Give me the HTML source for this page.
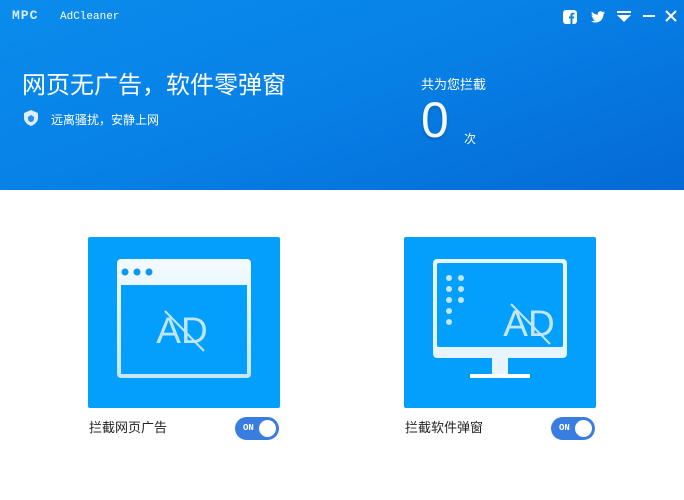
<!DOCTYPE html>
<html style="overflow:hidden;height:500px"><head><meta charset="utf-8"><style>
*{margin:0;padding:0;box-sizing:border-box}
body{width:684px;height:500px;overflow:hidden;background:#fff;font-family:"Liberation Sans","Noto Sans CJK SC",sans-serif;position:relative}
.hdr{position:absolute;left:0;top:0;width:684px;height:190px;background:linear-gradient(160deg,#0b8cec 0%,#0780e6 50%,#0569d4 100%);overflow:hidden}
.t{position:absolute;color:#fff;white-space:nowrap}
.card{position:absolute;top:237px;width:192px;height:171px;background:#02a0fc;border-radius:2px}
.lbl{position:absolute;top:419px;font-size:13px;color:#222;line-height:18px}
.tg{position:absolute;top:417px;width:44px;height:23px;border-radius:12px;background:#3a7de0}
.tg span{position:absolute;left:8px;top:6px;font:bold 9px "Liberation Mono",monospace;color:#fff}
.tg i{position:absolute;right:3px;top:3px;width:17px;height:17px;border-radius:50%;background:#fff}
</style></head><body>
<div class="hdr">
<div class="t" style="left:12px;top:8px;font:bold 13px 'Liberation Mono',monospace;letter-spacing:1px;opacity:.85">MPC</div>
<div class="t" style="left:60px;top:11px;font:11px 'Liberation Mono',monospace">AdCleaner</div>
<div class="t" style="left:22px;top:71px;font-size:24px;line-height:30px">网页无广告，软件零弹窗</div>
<svg style="position:absolute;left:24px;top:110px" width="14" height="16" viewBox="0 0 14 16"><path d="M7 0L14 3V8C14 12 10 15 7 16C4 15 0 12 0 8V3Z" fill="#dfeefc"/><path d="M7 5L10 7V9C10 11 8 12 7 12C6 12 4 11 4 9V7Z" fill="#2b8fe6"/></svg>
<div class="t" style="left:51px;top:111px;font-size:12px">远离骚扰，安静上网</div>
<div class="t" style="left:421px;top:74px;font-size:13px">共为您拦截</div>
<div class="t" style="left:421px;top:92px;font-size:50px;line-height:56px;color:#f2f8ff;text-shadow:0 2px 3px rgba(0,0,0,.2)">0</div>
<div class="t" style="left:464px;top:130px;font-size:12px">次</div>
<svg style="position:absolute;left:563px;top:10px" width="14" height="14"><rect width="14" height="14" rx="3" fill="#fff"/><path d="M9.5 14V8.5H11L11.3 6.5H9.5V5.5C9.5 4.9 9.7 4.5 10.5 4.5H11.4V2.8C11 2.7 10.4 2.7 9.8 2.7C8.4 2.7 7.5 3.5 7.5 5V6.5H6V8.5H7.5V14Z" fill="#0a86e8"/></svg>
<svg style="position:absolute;left:591px;top:11px" width="14" height="12" viewBox="0 0 24 20"><path d="M24 2.4a10 10 0 0 1-2.8.8A5 5 0 0 0 23.3.4a10 10 0 0 1-3.1 1.2A4.9 4.9 0 0 0 11.8 6 14 14 0 0 1 1.7.9a4.9 4.9 0 0 0 1.5 6.6A4.9 4.9 0 0 1 1 6.9a4.9 4.9 0 0 0 3.9 4.8 5 5 0 0 1-2.2.1 4.9 4.9 0 0 0 4.6 3.4A9.9 9.9 0 0 1 0 17.2 14 14 0 0 0 7.5 19.4c9 0 14-7.5 14-14v-.6A10 10 0 0 0 24 2.4z" fill="#fff"/></svg>
<svg style="position:absolute;left:617px;top:11px" width="14" height="12"><rect x="0" y="0" width="14" height="2" fill="#fff"/><path d="M0 4H14L7 11Z" fill="#fff"/></svg>
<div style="position:absolute;left:643px;top:15px;width:12px;height:2px;background:#fff"></div>
<svg style="position:absolute;left:665px;top:10px" width="12" height="12"><path d="M1 1L11 11M11 1L1 11" stroke="#fff" stroke-width="2"/></svg>
</div>

<div class="card" style="left:88px">
<svg width="192" height="171">
<defs><linearGradient id="tb" x1="0" y1="0" x2="0" y2="1"><stop offset="0" stop-color="#f4fbff"/><stop offset="1" stop-color="#c6e6fb"/></linearGradient></defs>
<rect x="29" y="22" width="134" height="119" rx="4" fill="url(#tb)"/>
<rect x="33" y="48" width="126" height="89" fill="#02a0fc"/>
<circle cx="37" cy="35" r="3.5" fill="#0797ee"/><circle cx="49" cy="35" r="3.5" fill="#0797ee"/><circle cx="61" cy="35" r="3.5" fill="#0797ee"/>
<text x="94" y="106" text-anchor="middle" font-family="Liberation Sans,sans-serif" font-size="37" fill="#bfe6ff">AD</text>
<path d="M77 74L116 114" stroke="#bfe6ff" stroke-width="2"/>
</svg></div>

<div class="card" style="left:404px">
<svg width="192" height="171">
<rect x="29" y="22" width="134" height="99" rx="4" fill="#e6f5ff"/>
<rect x="33" y="26" width="126" height="84" rx="2" fill="#02a0fc"/>
<rect x="88" y="121" width="16" height="16" fill="#e6f5ff"/>
<rect x="66" y="137" width="60" height="4" rx="1" fill="#fff"/>
<g fill="#c3e6fc"><circle cx="45" cy="41" r="3"/><circle cx="57" cy="41" r="3"/><circle cx="45" cy="52" r="3"/><circle cx="57" cy="52" r="3"/><circle cx="45" cy="63" r="3"/><circle cx="57" cy="63" r="3"/><circle cx="45" cy="74" r="3"/><circle cx="45" cy="85" r="3"/></g>
<text x="125" y="99" text-anchor="middle" font-family="Liberation Sans,sans-serif" font-size="37" fill="#c3e6fc">AD</text>
<path d="M107 67L146 107" stroke="#c3e6fc" stroke-width="2"/>
</svg></div>

<div class="lbl" style="left:89px">拦截网页广告</div>
<div class="tg" style="left:235px"><span>ON</span><i></i></div>
<div class="lbl" style="left:405px">拦截软件弹窗</div>
<div class="tg" style="left:551px"><span>ON</span><i></i></div>
</body></html>
